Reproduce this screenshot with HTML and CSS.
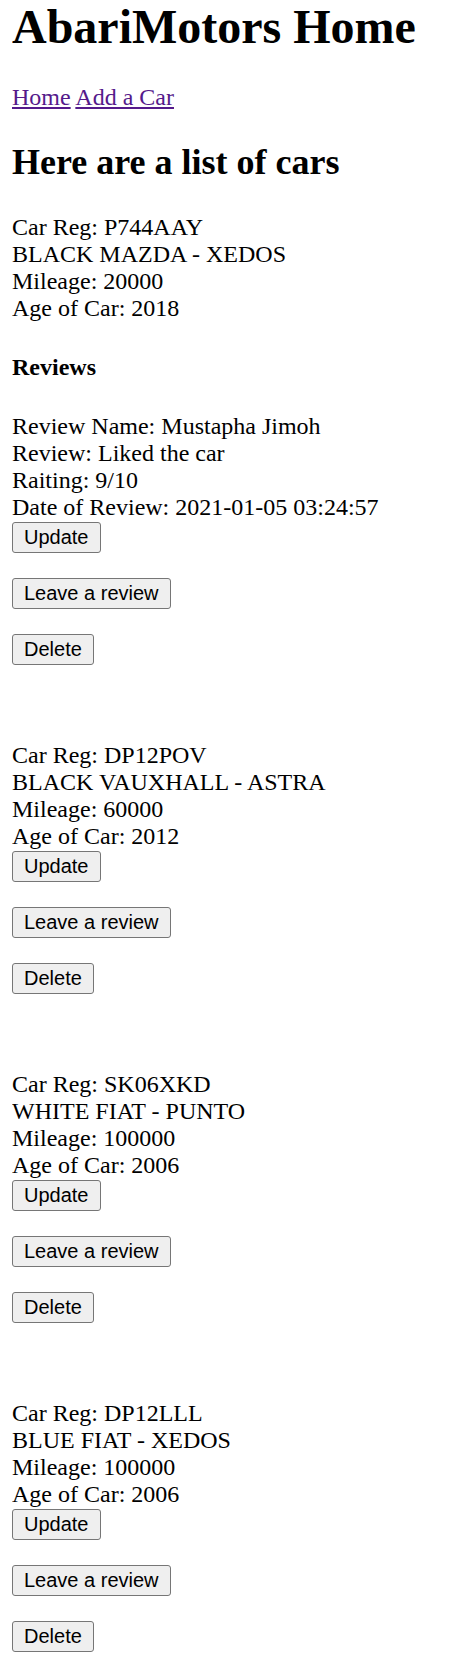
FILE: index.html
```html
<!DOCTYPE html>
<html>
<head>
<meta charset="utf-8">
<title>AbariMotors Home</title>
<link rel="stylesheet" href="styles.css">
</head>
<body>
<h1 class="title">AbariMotors Home</h1>
<nav class="nav"><a href="#" class="link">Home</a> <a href="#" class="link">Add a Car</a></nav>
<h2 class="subtitle">Here are a list of cars</h2>

<section class="car">
  <div class="info">Car Reg: P744AAY<br>BLACK MAZDA - XEDOS<br>Mileage: 20000<br>Age of Car: 2018</div>
  <h4 class="reviews-title">Reviews</h4>
  <div class="info">Review Name: Mustapha Jimoh<br>Review: Liked the car<br>Raiting: 9/10<br>Date of Review: 2021-01-05 03:24:57</div>
  <form class="action"><button type="button" class="btn">Update</button></form>
  <form class="action"><button type="button" class="btn">Leave a review</button></form>
  <form class="action"><button type="button" class="btn">Delete</button></form>
</section>

<section class="car">
  <div class="info">Car Reg: DP12POV<br>BLACK VAUXHALL - ASTRA<br>Mileage: 60000<br>Age of Car: 2012</div>
  <form class="action"><button type="button" class="btn">Update</button></form>
  <form class="action"><button type="button" class="btn">Leave a review</button></form>
  <form class="action"><button type="button" class="btn">Delete</button></form>
</section>

<section class="car">
  <div class="info">Car Reg: SK06XKD<br>WHITE FIAT - PUNTO<br>Mileage: 100000<br>Age of Car: 2006</div>
  <form class="action"><button type="button" class="btn">Update</button></form>
  <form class="action"><button type="button" class="btn">Leave a review</button></form>
  <form class="action"><button type="button" class="btn">Delete</button></form>
</section>

<section class="car">
  <div class="info">Car Reg: DP12LLL<br>BLUE FIAT - XEDOS<br>Mileage: 100000<br>Age of Car: 2006</div>
  <form class="action"><button type="button" class="btn">Update</button></form>
  <form class="action"><button type="button" class="btn">Leave a review</button></form>
  <form class="action"><button type="button" class="btn">Delete</button></form>
</section>
</body>
</html>
```

FILE: styles.css
```css
html, body {
  background: #ffffff;
}
body {
  margin: 0 12px;
  font-family: "Liberation Serif", "Times New Roman", serif;
  font-size: 24px;
  color: #000;
}
.title {
  font-size: 48px;
  font-weight: bold;
  margin: -1px 0 30px;
}
.nav {
  display: block;
}
.link {
  color: #551a8b;
  text-decoration: underline;
}
.subtitle {
  font-size: 36px;
  font-weight: bold;
  margin: 30px 0 31px;
}
.car {
  margin: 0 0 77px;
}
.reviews-title {
  font-size: 24px;
  font-weight: bold;
  margin: 32px 0;
}
.info {
  margin: 0;
}
.action {
  margin: 0 0 24px;
  padding-top: 1px;
}
.btn {
  display: block;
  font-family: "Liberation Sans", Arial, sans-serif;
  font-size: 20px;
  line-height: 23px;
  color: #000;
  background: #efefef;
  border: 1px solid #767676;
  border-radius: 3px;
  padding: 3px 11px;
  margin: 0;
}
```
